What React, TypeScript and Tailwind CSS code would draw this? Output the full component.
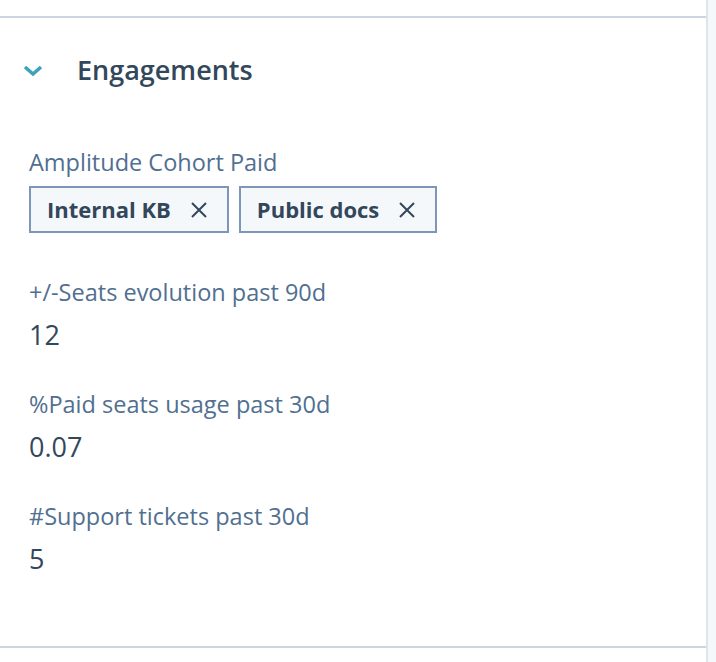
const fields = [
  { label: "+/-Seats evolution past 90d", value: "12" },
  { label: "%Paid seats usage past 30d", value: "0.07" },
  { label: "#Support tickets past 30d", value: "5" },
];

function Tag({ text }: { text: string }) {
  return (
    <div className="flex h-[47px] items-center gap-[20px] border-2 border-[#7c98b6] bg-[#f5f8fa] pl-[16px] pr-[20px]">
      <span className="text-[22px] font-bold text-[#33475b]">{text}</span>
      <svg width="16" height="16" viewBox="0 0 16 16" fill="none" stroke="#33475b" strokeWidth="2">
        <path d="M1 1l14 14M15 1L1 15" />
      </svg>
    </div>
  );
}

export default function App() {
  return (
    <div
      className="flex h-[662px] w-[716px] bg-white"
      style={{ fontFamily: "'Open Sans', 'Noto Sans', sans-serif" }}
    >
      <div className="flex w-[706px] flex-col">
        <div className="h-[16px]" />
        <div className="h-[632px] border-y-2 border-[#cbd6e2]">
          {/* header */}
          <div className="mt-[32px] flex h-[40px] items-center pl-[23px]">
            <svg width="20" height="11" viewBox="0 0 20 11" fill="none" stroke="#3fa2bd" strokeWidth="3.5">
              <path d="M2 2l8 7 8-7" />
            </svg>
            <span className="ml-[34px] text-[27px] font-semibold text-[#33475b]">Engagements</span>
          </div>

          <div className="pl-[29px] pt-[58px]">
            <div className="text-[23.5px] leading-[28px] text-[#516f90]">Amplitude Cohort Paid</div>
            <div className="mt-[10px] flex gap-[10px]">
              <Tag text="Internal KB" />
              <Tag text="Public docs" />
            </div>

            {fields.map((f, i) => (
              <div key={f.label} className={i === 0 ? "mt-[45px]" : "mt-[41px]"}>
                <div className="text-[23.5px] leading-[28px] text-[#516f90]">{f.label}</div>
                <div className="mt-[15px] text-[27px] leading-[28px] text-[#33475b]">{f.value}</div>
              </div>
            ))}
          </div>
        </div>
      </div>
      <div className="w-[2px] bg-[#dfe3eb]" />
      <div className="flex-1 bg-[#f5f8fa]" />
    </div>
  );
}
